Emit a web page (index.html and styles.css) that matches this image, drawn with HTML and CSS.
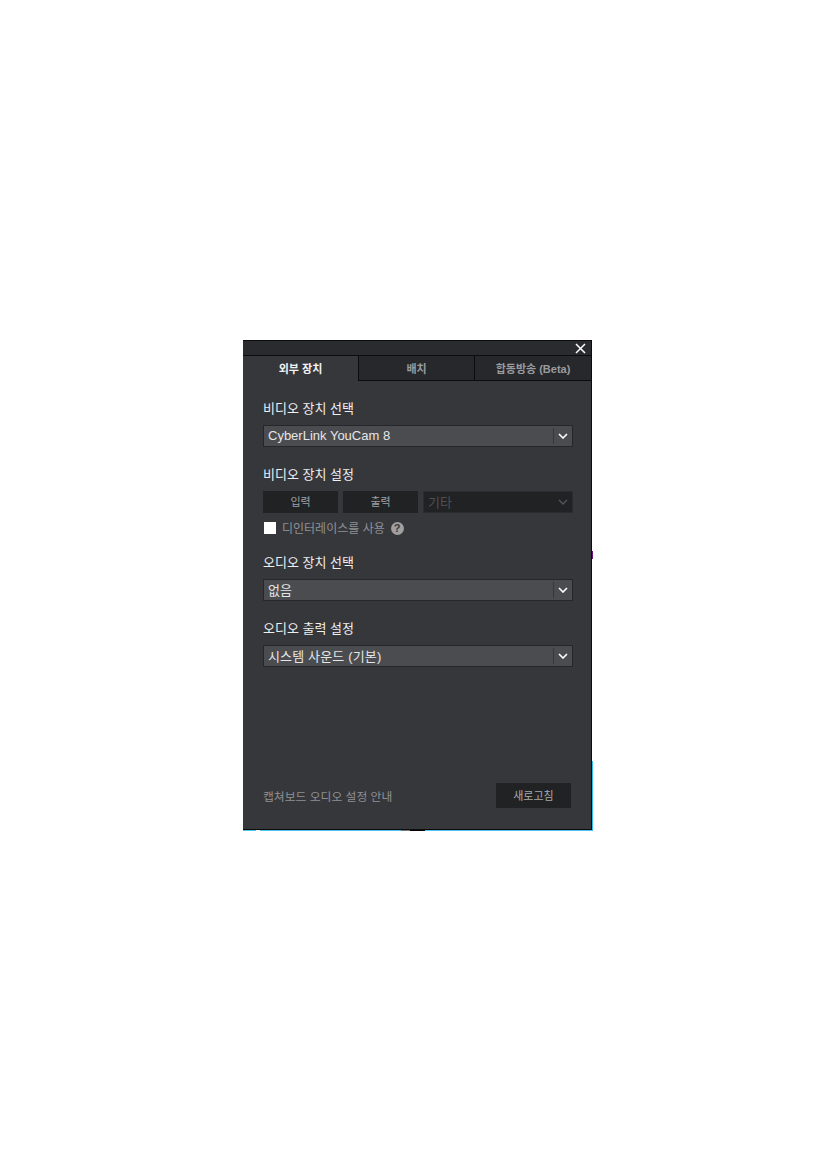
FILE: index.html
```html
<!DOCTYPE html>
<html lang="ko">
<head>
<meta charset="utf-8">
<title>외부 장치</title>
<link rel="stylesheet" href="styles.css">
</head>
<body>
<div class="panel">
  <div class="titlebar">
    <svg class="close" width="11" height="11" viewBox="0 0 11 11"><path d="M1 1 10 10M10 1 1 10" stroke="#fff" stroke-width="1.5" fill="none"/></svg>
  </div>
  <div class="tabs">
    <div class="tab active">외부 장치</div>
    <div class="tab">배치</div>
    <div class="tab">합동방송 (Beta)</div>
  </div>
  <div class="content">
    <div class="label first">비디오 장치 선택</div>
    <div class="select"><span class="value latin">CyberLink YouCam 8</span><span class="arrow"><svg width="10" height="6" viewBox="0 0 10 6"><path d="M1 1 5 5 9 1" stroke="#fff" stroke-width="1.6" fill="none"/></svg></span></div>

    <div class="label">비디오 장치 설정</div>
    <div class="row">
      <div class="btn">입력</div>
      <div class="btn">출력</div>
      <div class="select disabled"><span class="value">기타</span><span class="arrow"><svg width="10" height="6" viewBox="0 0 10 6"><path d="M1 1 5 5 9 1" stroke="#55565a" stroke-width="1.4" fill="none"/></svg></span></div>
    </div>
    <div class="check">
      <span class="box"></span>
      <span class="check-label">디인터레이스를 사용</span>
      <span class="help">?</span>
    </div>

    <div class="label audio">오디오 장치 선택</div>
    <div class="select"><span class="value">없음</span><span class="arrow"><svg width="10" height="6" viewBox="0 0 10 6"><path d="M1 1 5 5 9 1" stroke="#fff" stroke-width="1.6" fill="none"/></svg></span></div>

    <div class="label">오디오 출력 설정</div>
    <div class="select"><span class="value">시스템 사운드 (기본)</span><span class="arrow"><svg width="10" height="6" viewBox="0 0 10 6"><path d="M1 1 5 5 9 1" stroke="#fff" stroke-width="1.6" fill="none"/></svg></span></div>
  </div>
  <div class="footer">
    <span class="guide">캡쳐보드 오디오 설정 안내</span>
    <div class="btn refresh">새로고침</div>
  </div>
  <div class="edge-bottom"></div>
  <div class="edge-right"></div>
  <div class="edge-purple"></div>
</div>
</body>
</html>
```
FILE: styles.css
```css
html, body { margin: 0; background: #fff; }
body {
  padding: 340px 0 0 243px;
  height: 831px;
  font-family: "Noto Sans CJK KR", "Liberation Sans", sans-serif;
}
.panel {
  position: relative;
  box-sizing: border-box;
  width: 349px;
  height: 490px;
  background: #36373b;
  border-top: 1px solid #0c0c0c;
  border-right: 1px solid #0c0c0c;
  border-bottom: 1px solid #0c0c0c;
  display: flex;
  flex-direction: column;
}
.titlebar {
  height: 14px;
  background: #2a2b2e;
  display: flex;
  justify-content: flex-end;
  align-items: center;
  padding-right: 5px;
  flex: none;
}
.close { display: block; }
.tabs { display: flex; height: 26px; flex: none; }
.tab {
  box-sizing: border-box;
  flex: 1;
  display: flex;
  align-items: center;
  justify-content: center;
  padding-bottom: 1px;
  font-size: 11px;
  font-family: "Liberation Sans", "Noto Sans CJK KR", sans-serif;
  font-weight: 700;
  color: #9a9b9e;
  background: #26282b;
  border-top: 1px solid #0c0c0c;
  border-bottom: 1px solid #0c0c0c;
  border-left: 1px solid #0c0c0c;
}
.tab.active {
  color: #f2f2f2;
  background: #36373b;
  border-bottom: 0;
  border-left: 0;
  flex: none;
  width: 115px;
}
.tab:nth-child(2) { flex: none; width: 116px; }
.content { padding: 0 18px 0 20px; flex: 1; }
.label {
  font-size: 13px;
  line-height: 18px;
  color: #f0f0f0;
  margin: 18px 0 8px;
}
.label.audio { margin-top: 15px; }
.select {
  box-sizing: border-box;
  height: 22px;
  display: flex;
  align-items: center;
  background: #4b4c50;
  border: 1px solid #26272a;
  color: #e6e6e6;
  font-size: 13px;
  font-family: "Liberation Sans", "Noto Sans CJK KR", sans-serif;
}
.value { flex: 1; padding: 0 0 2px 4px; letter-spacing: .15px; }
.value.latin { padding-bottom: 1px; letter-spacing: 0; }
.arrow {
  width: 18px;
  height: 16px;
  display: flex;
  align-items: center;
  justify-content: center;
  border-left: 1px solid #36373b;
}
.row { display: flex; gap: 5px; }
.btn {
  box-sizing: border-box;
  width: 75px;
  height: 22px;
  padding-bottom: 2px;
  background: #202224;
  color: #a0a1a3;
  font-size: 11px;
  display: flex;
  align-items: center;
  justify-content: center;
  flex: none;
}
.select.disabled { flex: 1; background: #202224; color: #4f5053; border-color: #2b2c2f; }
.select.disabled .arrow { border-left: 0; }
.check { display: flex; align-items: center; height: 20px; margin-top: 5px; }
.box { width: 12px; height: 12px; margin-left: 1px; background: #fff; flex: none; }
.check-label { font-size: 12px; color: #8f9093; margin-left: 6px; padding-bottom: 2px; }
.help {
  width: 13px;
  height: 13px;
  border-radius: 50%;
  background: #a0a0a0;
  color: #36373b;
  font: 700 11px/13px "Liberation Sans", sans-serif;
  text-align: center;
  margin-left: 6px;
}
.footer {
  display: flex;
  align-items: center;
  justify-content: space-between;
  padding: 0 20px 21px 20px;
  flex: none;
}
.guide { font-size: 11.8px; color: #8f9093; }
.refresh { height: 25px; width: 75px; color: #a8a9ab; }
.edge-bottom {
  position: absolute;
  left: 0;
  right: -1px;
  bottom: -2px;
  height: 1px;
  background: linear-gradient(to right,
    #4cc4ee 0 13px, #fff 13px 17px, #4cc4ee 17px 158px,
    #77787c 158px 167px, #000 167px 182px, #4cc4ee 182px);
}
.edge-right {
  position: absolute;
  right: -2px;
  bottom: -2px;
  width: 1px;
  height: 70px;
  background: #2fc0f0;
}
.edge-purple {
  position: absolute;
  right: -2px;
  top: 210px;
  width: 1px;
  height: 8px;
  background: #6a0f80;
}
```
